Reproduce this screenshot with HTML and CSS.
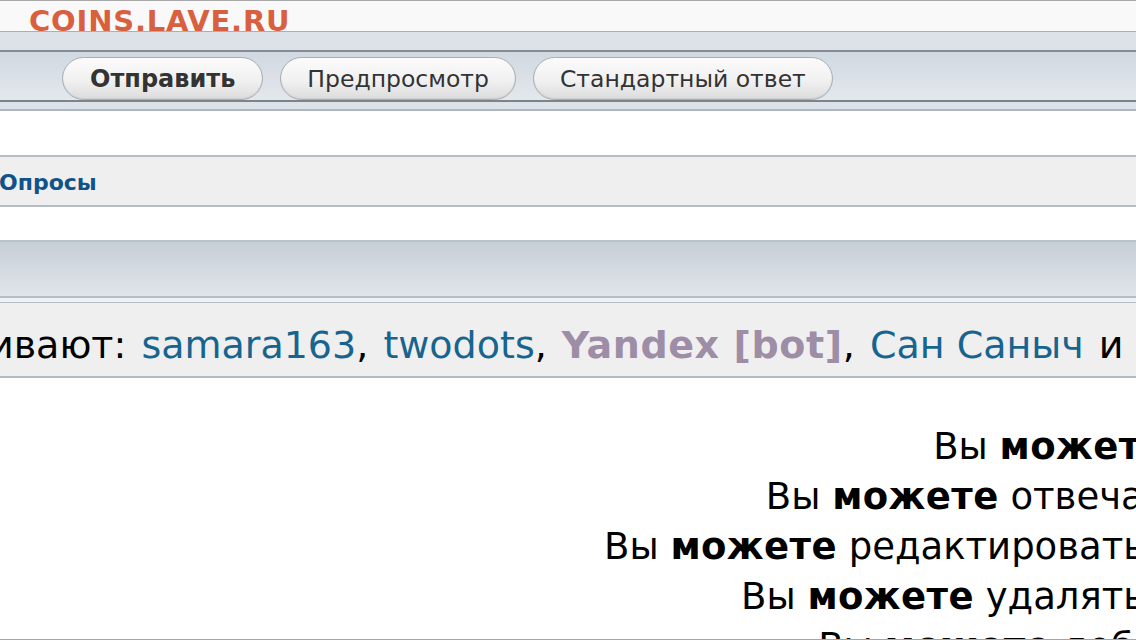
FILE: index.html
```html
<!DOCTYPE html>
<html lang="ru">

<head>
    <meta charset="UTF-8">
    <meta name="viewport" content="width=device-width, initial-scale=1.0">
    <title>Ответить</title>
    <link rel="stylesheet" href="styles.css">
</head>

<body>

    <div class="watermark">COINS.LAVE.RU</div>

    <div class="top-strip"></div>

    <div class="submit-panel">
        <div class="submit-buttons">
            <button class="btn btn-main">Отправить</button>
            <button class="btn">Предпросмотр</button>
            <button class="btn">Стандартный ответ</button>
        </div>
    </div>

    <div class="spacer"></div>

    <div class="tabs-box">
        <a class="tab-link" href="#">Опросы</a>
    </div>

    <div class="spacer small"></div>

    <div class="section-bar">
        <div class="section-bar-inner"></div>
    </div>

    <div class="online-box">
        <p>ивают: <a class="user" href="#">samara163</a>, <a class="user" href="#">twodots</a>, <span class="bot">Yandex [bot]</span>, <a class="user" href="#">Сан Саныч</a> и</p>
    </div>

    <div class="perms">
        <div class="perms-list">
            <p>Вы <b>можете</b> начинать темы</p>
            <p>Вы <b>можете</b> отвечать на сообщения</p>
            <p>Вы <b>можете</b> редактировать свои сообщения</p>
            <p>Вы <b>можете</b> удалять свои сообщения</p>
            <p>Вы <b>можете</b> добавлять вложения</p>
        </div>
    </div>

    <div class="bottom-line"></div>

</body>

</html>
```

FILE: styles.css
```css
body {
    margin: 0;
    font-family: "DejaVu Sans", Verdana, sans-serif;
    color: #000;
    background-color: #fff;
    overflow: hidden;
    width: 1136px;
    height: 640px;
}

.watermark {
    position: absolute;
    left: 29px;
    top: 4px;
    font-size: 29px;
    font-weight: bold;
    color: #d9603f;
    letter-spacing: 0.8px;
}

.top-strip {
    height: 30px;
    background-color: #f9f9f9;
    border-top: 1px solid #a8a8a8;
}

.submit-panel {
    background-color: #dce2e7;
    border-top: 1px solid #a7b0ba;
    border-bottom: 2px solid #aeb8c2;
    padding: 18px 0 7px;
}

.submit-buttons {
    display: flex;
    gap: 17px;
    padding: 5px 0 0 62px;
    height: 43px;
    border-top: 2px solid #858b92;
    border-bottom: 2px solid #7d838a;
    background: linear-gradient(#d1d8e0, #e3e8ec);
}

.btn {
    height: 43px;
    padding: 0 26px;
    border: 1px solid #a7aeb6;
    border-radius: 22px;
    background: linear-gradient(#fbfbfb, #f1f1f1 55%, #dcdcdc);
    box-shadow: inset 0 -1px 1px #cfcfcf;
    font-family: "DejaVu Sans", Verdana, sans-serif;
    font-size: 23.5px;
    color: #333;
}

.btn-main {
    font-size: 24px;
    font-weight: bold;
    padding: 0 27px;
}

.spacer {
    height: 44px;
}

.spacer.small {
    height: 33px;
}

.tabs-box {
    height: 46px;
    display: flex;
    align-items: center;
    padding-top: 2px;
    box-sizing: content-box;
    background-color: #efefef;
    border-top: 2px solid #b4bcc5;
    border-bottom: 2px solid #b4bcc5;
}

.tab-link {
    margin-left: -1px;
    font-size: 22px;
    font-weight: bold;
    color: #105289;
    text-decoration: none;
}

.section-bar {
    border-top: 2px solid #b9c1c9;
    border-bottom: 1px solid #b4bdc6;
    padding-bottom: 4px;
    background-color: #eef0f3;
}

.section-bar-inner {
    height: 54px;
    background: linear-gradient(#c6ced7, #e0e5e9);
    border-bottom: 2px solid #b5bec8;
}

.online-box {
    height: 73px;
    background-color: #efefef;
    border-bottom: 2px solid #b3bcc6;
    display: flex;
    align-items: center;
}

.online-box p {
    margin: 11px 0 0 -11px;
    white-space: nowrap;
    font-size: 38px;
    word-spacing: 3px;
}

.user {
    color: #17648f;
    text-decoration: none;
    word-spacing: 0;
}

.bot {
    color: #9e8da7;
    font-weight: bold;
    letter-spacing: 0.6px;
    word-spacing: 0;
}

.perms {
    padding-top: 44px;
}

.perms-list {
    margin-right: -338px;
    text-align: right;
}

.perms-list p {
    margin: 0;
    font-size: 37px;
    line-height: 50px;
    white-space: nowrap;
}

.perms-list b {
    letter-spacing: 0.4px;
}

.bottom-line {
    position: fixed;
    left: 0;
    right: 0;
    bottom: 0;
    height: 1px;
    background-color: #a6a6a6;
}
```
